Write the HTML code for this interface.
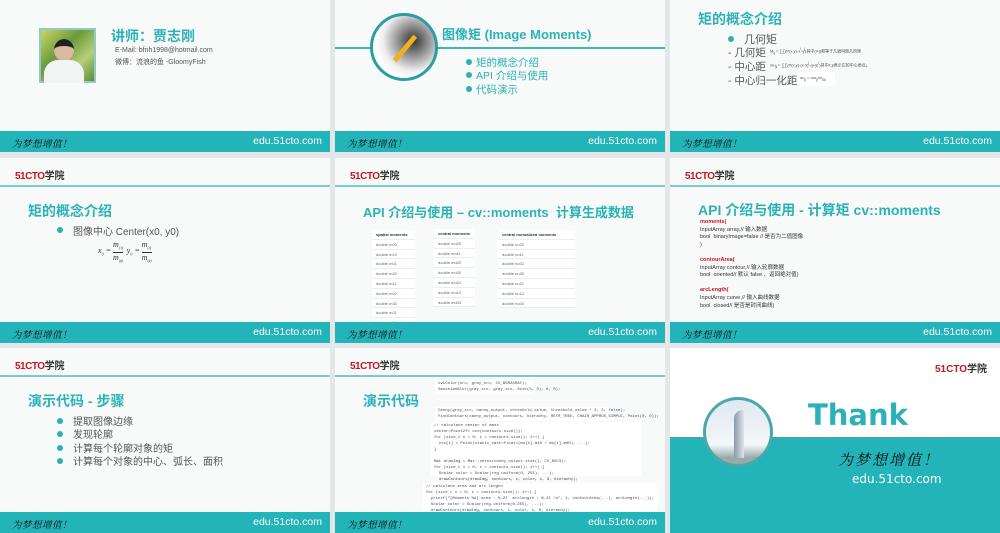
<!DOCTYPE html>
<html><head><meta charset="utf-8"><style>
*{margin:0;padding:0;box-sizing:border-box}
body{width:1000px;height:530px;background:#e4e7e7;position:relative;overflow:hidden;font-family:"Liberation Sans","Noto Sans CJK SC",sans-serif}
.s{position:absolute;width:330px;height:185px;background:#f8fafa;overflow:hidden}
.bar{position:absolute;left:0;top:164px;width:330px;height:21px;background:#22b4b9}
.slog{position:absolute;left:12px;top:5px;font-family:"Liberation Serif","Noto Serif CJK SC",serif;font-style:italic;font-size:9.5px;color:#111;letter-spacing:0.5px}
.url{position:absolute;right:8px;top:4px;font-size:10.5px;color:#fff}
.logo{position:absolute;left:15px;top:9px;font-size:10px;font-weight:bold;color:#333;font-family:"Liberation Sans","Noto Sans CJK SC",sans-serif}
.logo b{color:#c8161d;font-family:"Liberation Sans",sans-serif;letter-spacing:-0.5px}
.hl{position:absolute;left:0;top:27px;width:330px;height:2px;background:#7ccbce}
.t{position:absolute;font-size:14px;font-weight:bold;color:#2bb2b7;white-space:nowrap}
.a{position:absolute;white-space:nowrap}
.dot{position:absolute;width:6px;height:6px;border-radius:50%;background:#2bb2b7}
.g{color:#555;font-size:10px}
.tbl{position:absolute;background:#fff;font-size:4px;color:#666}
.tbl div{height:9.8px;border-bottom:1px solid #e6eef3;padding-left:4px;line-height:9px}
.code{position:absolute;background:#fff;font-family:"Liberation Mono",monospace;font-size:4px;color:#445;line-height:6px;padding:1px 3px;white-space:pre}
</style></head><body>

<!-- Row 1 col 1 -->
<div class="s" style="left:0;top:-33px">
 <div class="a" style="left:39px;top:61px;width:57px;height:55px;border:2px solid #8fc9c9;background:linear-gradient(135deg,#c8d86a,#6c9a3c 40%,#b6cf78 70%,#5f8a36)">
  <div style="position:absolute;left:13px;top:9px;width:20px;height:22px;border-radius:50%;background:#d9b9a0;border-top:7px solid #222"></div>
  <div style="position:absolute;left:3px;top:30px;width:40px;height:23px;border-radius:14px 14px 0 0;background:#f2f4f4"></div>
 </div>
 <div class="t" style="left:111px;top:59px;font-size:14px">讲师：贾志刚</div>
 <div class="a" style="left:115px;top:80px;font-size:7px;color:#555">E-Mail: bfnh1998@hotmail.com</div>
 <div class="a" style="left:115px;top:90px;font-size:7px;color:#555">微博：流浪的鱼 -GloomyFish</div>
 <div class="bar"><span class="slog">为梦想增值！</span><span class="url">edu.51cto.com</span></div>
</div>

<!-- Row 1 col 2 -->
<div class="s" style="left:335px;top:-33px">
 <div class="a" style="left:0;top:80px;width:330px;height:2px;background:#3fb6bb"></div>
 <div class="a" style="left:35px;top:46px;width:68px;height:68px;border-radius:50%;border:3px solid #2a9ea3;background:radial-gradient(circle at 65% 40%,#333 0,#888 25%,#eee 55%,#fff 70%)">
  <div style="position:absolute;left:16px;top:30px;width:32px;height:5px;background:#f0b020;transform:rotate(-50deg)"></div>
 </div>
 <div class="t" style="left:107px;top:57px;font-size:13px">图像矩 (Image Moments)</div>
 <div class="dot" style="left:131px;top:92px"></div><div class="a" style="left:141px;top:88px;font-size:10.5px;color:#2bb2b7">矩的概念介绍</div>
 <div class="dot" style="left:131px;top:105px"></div><div class="a" style="left:141px;top:101px;font-size:10.5px;color:#2bb2b7">API 介绍与使用</div>
 <div class="dot" style="left:131px;top:119px"></div><div class="a" style="left:141px;top:115px;font-size:10.5px;color:#2bb2b7">代码演示</div>
 <div class="bar"><span class="slog">为梦想增值！</span><span class="url">edu.51cto.com</span></div>
</div>

<!-- Row 1 col 3 -->
<div class="s" style="left:670px;top:-33px">
 <div class="t" style="left:28px;top:42px">矩的概念介绍</div>
 <div class="dot" style="left:58px;top:69px"></div><div class="a g" style="left:74px;top:64px;font-size:11px">几何矩</div>
 <div class="a g" style="left:58px;top:78px;font-size:10.5px">- 几何矩</div>
 <div class="a" style="left:100px;top:80px;font-size:4px;color:#444">M<sub>ij</sub> = ∑∑(P(x,y)·x<sup>i</sup>·y<sup>j</sup>)其中(i+j)和等于几就叫做几阶矩</div>
 <div class="a g" style="left:58px;top:92px;font-size:10.5px">- 中心距</div>
 <div class="a" style="left:100px;top:94px;font-size:4px;color:#444">mu<sub>ji</sub> = ∑∑(P(x,y)·(x-x̄)<sup>j</sup>·(y-ȳ)<sup>i</sup>)其中x̄,ȳ表示它的中心质点。</div>
 <div class="a g" style="left:58px;top:106px;font-size:10.5px">- 中心归一化距</div>
 <div class="a" style="left:128px;top:105px;width:37px;height:14px;background:#fff;font-size:4px;color:#444;padding:3px 2px">nu<sub>ji</sub> = mu<sub>ji</sub>/m<sub>00</sub></div>
 <div class="bar"><span class="slog">为梦想增值！</span><span class="url">edu.51cto.com</span></div>
</div>

<!-- Row 2 col 1 -->
<div class="s" style="left:0;top:158px">
 <div class="logo"><b>51CTO</b>学院</div><div class="hl"></div>
 <div class="t" style="left:28px;top:43px">矩的概念介绍</div>
 <div class="dot" style="left:57px;top:69px"></div><div class="a g" style="left:73px;top:65px">图像中心 Center(x0, y0)</div>
 <div class="a" style="left:98px;top:82px;font-family:'Liberation Serif',serif;font-style:italic;font-size:8px;color:#333;line-height:9px">
  <span style="display:inline-block;vertical-align:middle">x<sub style="font-size:4px">0</sub> =</span>
  <span style="display:inline-block;vertical-align:middle;text-align:center">m<sub style="font-size:4px">10</sub><br><span style="border-top:1px solid #333">m<sub style="font-size:4px">00</sub></span></span>
  <span style="display:inline-block;vertical-align:middle">&nbsp;y<sub style="font-size:4px">0</sub> =</span>
  <span style="display:inline-block;vertical-align:middle;text-align:center">m<sub style="font-size:4px">01</sub><br><span style="border-top:1px solid #333">m<sub style="font-size:4px">00</sub></span></span>
 </div>
 <div class="bar"><span class="slog">为梦想增值！</span><span class="url">edu.51cto.com</span></div>
</div>

<!-- Row 2 col 2 -->
<div class="s" style="left:335px;top:158px">
 <div class="logo"><b>51CTO</b>学院</div><div class="hl"></div>
 <div class="t" style="left:28px;top:44px;font-size:13px">API 介绍与使用 – cv::moments &nbsp;计算生成数据</div>
 <div class="tbl" style="left:37px;top:72px;width:43px"><div style="font-weight:bold;color:#333">spatial moments</div><div>double m00</div><div>double m10</div><div>double m01</div><div>double m20</div><div>double m11</div><div>double m02</div><div>double m30</div><div>double m21</div><div>double m12</div><div>double m03</div></div>
 <div class="tbl" style="left:99px;top:71px;width:41px"><div style="font-weight:bold;color:#333">central moments</div><div>double mu20</div><div>double mu11</div><div>double mu02</div><div>double mu30</div><div>double mu21</div><div>double mu12</div><div>double mu03</div></div>
 <div class="tbl" style="left:163px;top:72px;width:77px"><div style="font-weight:bold;color:#333">central normalized moments</div><div>double nu20</div><div>double nu11</div><div>double nu02</div><div>double nu30</div><div>double nu21</div><div>double nu12</div><div>double nu03</div></div>
 <div class="bar"><span class="slog">为梦想增值！</span><span class="url">edu.51cto.com</span></div>
</div>

<!-- Row 2 col 3 -->
<div class="s" style="left:670px;top:158px">
 <div class="logo"><b>51CTO</b>学院</div><div class="hl"></div>
 <div class="t" style="left:28px;top:42px;font-size:14px">API 介绍与使用 - 计算矩 cv::moments</div>
 <div class="a" style="left:30px;top:61px;font-size:5.5px;color:#333;line-height:7.6px">
  <span style="color:#c8161d;font-weight:bold">moments(</span><br>InputArray array,// 输入数据<br>bool &nbsp;binaryImage=false // 是否为二值图像<br>)<br><br>
  <span style="color:#c8161d;font-weight:bold">contourArea(</span><br>InputArray contour,// 输入轮廓数据<br>bool &nbsp;oriented// 默认 false 、返回绝对值)<br><br>
  <span style="color:#c8161d;font-weight:bold">arcLength(</span><br>InputArray curve,// 输入曲线数据<br>bool &nbsp;closed// 是否是封闭曲线)
 </div>
 <div class="bar"><span class="slog">为梦想增值！</span><span class="url">edu.51cto.com</span></div>
</div>

<!-- Row 3 col 1 -->
<div class="s" style="left:0;top:348px">
 <div class="logo"><b>51CTO</b>学院</div><div class="hl"></div>
 <div class="t" style="left:28px;top:43px">演示代码 - 步骤</div>
 <div class="dot" style="left:57px;top:70px"></div><div class="a g" style="left:73px;top:65px">提取图像边缘</div>
 <div class="dot" style="left:57px;top:83px"></div><div class="a g" style="left:73px;top:78px">发现轮廓</div>
 <div class="dot" style="left:57px;top:97px"></div><div class="a g" style="left:73px;top:92px">计算每个轮廓对象的矩</div>
 <div class="dot" style="left:57px;top:110px"></div><div class="a g" style="left:73px;top:105px">计算每个对象的中心、弧长、面积</div>
 <div class="bar"><span class="slog">为梦想增值！</span><span class="url">edu.51cto.com</span></div>
</div>

<!-- Row 3 col 2 -->
<div class="s" style="left:335px;top:348px">
 <div class="logo"><b>51CTO</b>学院</div><div class="hl"></div>
 <div class="t" style="left:28px;top:43px">演示代码</div>
 <div class="code" style="left:100px;top:32px;width:98px">cvtColor(src, gray_src, CV_BGR2GRAY);
GaussianBlur(gray_src, gray_src, Size(3, 3), 0, 0);</div>
 <div class="code" style="left:100px;top:59px;width:175px">Canny(gray_src, canny_output, threshold_value, threshold_value * 2, 3, false);
findContours(canny_output, contours, hierachy, RETR_TREE, CHAIN_APPROX_SIMPLE, Point(0, 0));</div>
 <div class="code" style="left:96px;top:74px;width:210px;height:54px">// calculate center of mass
vector&lt;Point2f&gt; ccs(contours.size());
for (size_t i = 0; i &lt; contours.size(); i++) {
  ccs[i] = Point(static_cast&lt;float&gt;(mu[i].m10 / mu[i].m00), ...);
}

Mat drawImg = Mat::zeros(canny_output.size(), CV_8UC3);
for (size_t i = 0; i &lt; contours.size(); i++) {
  Scalar color = Scalar(rng.uniform(0, 255), ...);
  drawContours(drawImg, contours, i, color, 1, 8, hierachy);
  circle(drawImg, ccs[i], 2, color, 2, 8);
}</div>
 <div class="code" style="left:88px;top:135px;width:235px;height:28px">// calculate area and arc length
for (size_t i = 0; i &lt; contours.size(); i++) {
  printf("[Moments %d] area : %.2f  arclength : %.2f \n", i, contourArea(...), arcLength(...));
  Scalar color = Scalar(rng.uniform(0,255), ...);
  drawContours(drawImg, contours, i, color, 1, 8, hierachy);</div>
 <div class="bar"><span class="slog">为梦想增值！</span><span class="url">edu.51cto.com</span></div>
</div>

<!-- Row 3 col 3 -->
<div class="s" style="left:670px;top:348px;background:#fff">
 <div class="a" style="left:0;top:89px;width:330px;height:96px;background:#22b4b9;border-top:1px solid #5a9a9a"></div>
 <div class="a" style="left:265px;top:12px;font-size:10px;font-weight:bold;color:#333"><b style="color:#c8161d">51CTO</b>学院</div>
 <div class="a" style="left:33px;top:49px;width:70px;height:70px;border-radius:50%;border:3px solid #4aa8ac;background:linear-gradient(180deg,#dfe8f0,#f4f7fa 70%,#9aa 90%)">
  <div style="position:absolute;left:28px;top:10px;width:10px;height:48px;border-radius:10px 2px 0 0;background:linear-gradient(90deg,#8a98a8,#dfe4ea)"></div>
 </div>
 <div class="a" style="left:138px;top:50px;font-size:29px;font-weight:bold;color:#2bb2b7;font-family:'DejaVu Sans',sans-serif">Thank</div>
 <div class="a" style="left:168px;top:101px;font-family:'Liberation Serif','Noto Serif CJK SC',serif;font-style:italic;font-size:15px;color:#111;letter-spacing:2px">为梦想增值！</div>
 <div class="a" style="left:182px;top:124px;font-size:12px;color:#fff;font-family:'DejaVu Sans',sans-serif">edu.51cto.com</div>
</div>

</body></html>
